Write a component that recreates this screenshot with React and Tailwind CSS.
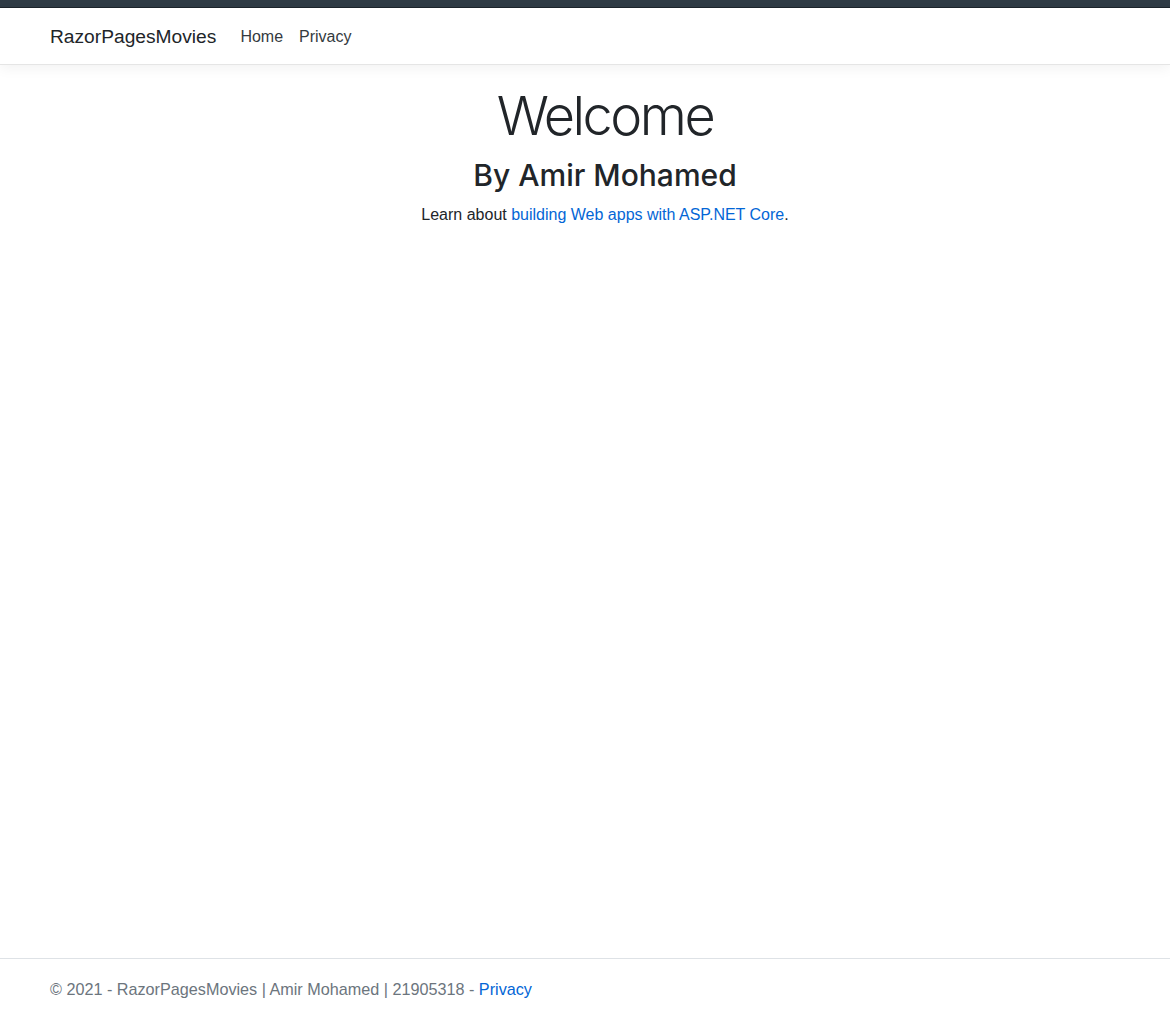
import React from 'react';

const BODY = 'font-["Liberation_Sans","Helvetica",sans-serif]';
const HEAD = 'font-["Inter","Liberation_Sans",sans-serif]';

export default function App() {
  return (
    <div className={`${BODY} flex flex-col h-[1018px] bg-white text-[#212529]`}>
      {/* top strip */}
      <div className="h-[8px] bg-[#2f3b45] border-b border-[#1c242b] shrink-0" />

      {/* Navbar */}
      <header className="shrink-0 border-b border-[#e5e5e5] bg-white shadow-[0_4px_12px_rgba(0,0,0,0.05)]">
        <nav className="h-[56px] pt-[2px] pl-[50px] flex items-center">
          <a className="text-[19.2px] text-[#212529] mr-[24px]">RazorPagesMovies</a>
          <ul className="flex items-center gap-[16px] text-[16px] text-[#343a40]">
            <li>Home</li>
            <li>Privacy</li>
          </ul>
        </nav>
      </header>

      {/* Main */}
      <main className="flex-1 pt-[17px] pl-[50px]">
        <div className="w-[1110px] text-center">
          <h1 className={`${HEAD} text-[54px] font-light leading-[67px] tracking-[-2.5px]`}>Welcome</h1>
          <h2 className={`${HEAD} text-[30px] font-medium leading-[36px] mt-[8px]`}>By Amir Mohamed</h2>
          <p className="text-[16px] leading-[24px] mt-[10px]">
            Learn about <a className="text-[#0366d6]">building Web apps with ASP.NET Core</a>.
          </p>
        </div>
      </main>

      {/* Footer */}
      <footer className="shrink-0 h-[60px] pt-[2px] border-t border-[#dee2e6] flex items-center pl-[50px] text-[16.2px] text-[#6c757d]">
        © 2021 - RazorPagesMovies | Amir Mohamed | 21905318 -&nbsp;<a className="text-[#0366d6]">Privacy</a>
      </footer>
    </div>
  );
}
